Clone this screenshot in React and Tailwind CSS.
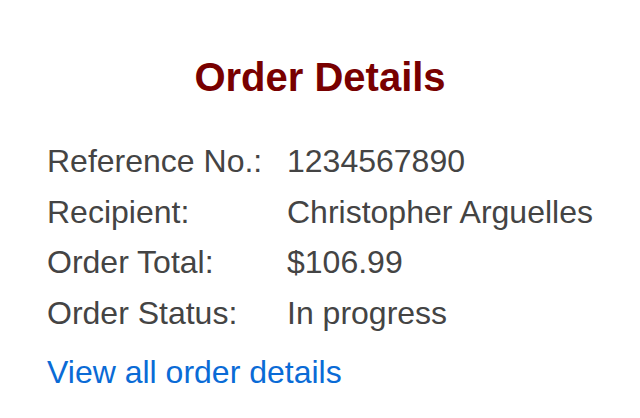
const rows = [
  ["Reference No.:", "1234567890"],
  ["Recipient:", "Christopher Arguelles"],
  ["Order Total:", "$106.99"],
  ["Order Status:", "In progress"],
];

const App = () => {
  return (
    <div
      className="w-[640px] h-[418px] bg-white pt-[53px] pl-[47px]"
      style={{ fontFamily: '"Liberation Sans", Arial, sans-serif' }}
    >
      <h1 className="text-center pr-[47px] text-[40px] leading-[48px] font-bold text-[#780000]">
        Order Details
      </h1>
      <div className="mt-[35px] text-[32px] leading-[50.7px] text-[#444444]">
        {rows.map(([label, value]) => (
          <div key={label} className="flex">
            <span className="w-[240px] shrink-0">{label}</span>
            <span>{value}</span>
          </div>
        ))}
      </div>
      <a href="#" className="block mt-[8px] text-[32px] leading-[50.7px] text-[#0a6bd6]">
        View all order details
      </a>
    </div>
  );
};

export default App;
